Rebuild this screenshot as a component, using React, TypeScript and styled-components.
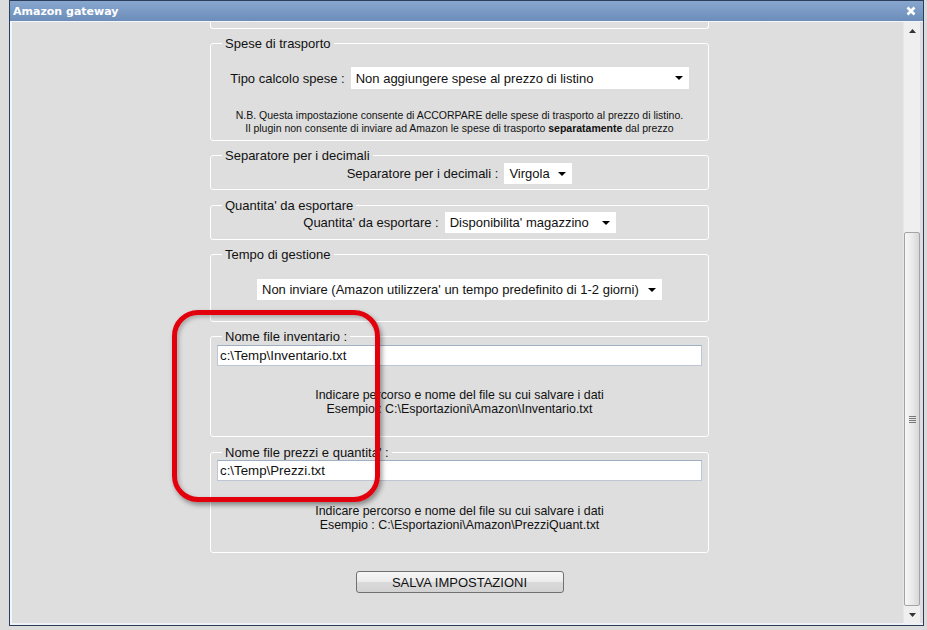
import React from 'react';
import styled, { createGlobalStyle } from 'styled-components';

const Global = createGlobalStyle`
  html, body { margin: 0; padding: 0; background: #dcdcdc; }
  body { font-family: "Liberation Sans", Arial, sans-serif; color: #111; }
`;

const Page = styled.div`
  width: 927px;
  height: 630px;
  overflow: hidden;
  padding-left: 9px;
  box-sizing: border-box;
`;

const Window = styled.div`
  position: relative;
  width: 915px;
  height: 626px;
  box-sizing: border-box;
  border: 1px solid #2c3e5b;
  display: flex;
  flex-direction: column;
  background: #dedede;
`;

const TitleBar = styled.div`
  height: 20px;
  flex: none;
  background: linear-gradient(#88a7cf, #6c8dba);
  border-bottom: 1px solid #f3f6fa;
  display: flex;
  align-items: center;
  justify-content: space-between;
  padding: 0 7px 0 3px;
`;

const Title = styled.span`
  font-family: "DejaVu Sans", Verdana, sans-serif;
  font-weight: bold;
  font-size: 11px;
  color: #fff;
  margin-top: 1px;
`;

const Main = styled.div`
  flex: 1;
  display: flex;
  min-height: 0;
  border-left: 2px solid #f2f5f9;
  border-bottom: 2px solid #eef1f5;
`;

const Content = styled.div`
  flex: 1;
  display: flex;
  flex-direction: column;
  align-items: center;
  overflow: hidden;
  padding-left: 4px;
`;

const Stub = styled.div`
  width: 499px;
  height: 7px;
  box-sizing: border-box;
  border: 1px solid #fff;
  border-top: none;
  border-radius: 0 0 3px 3px;
`;

const Group = styled.section<{ $pb: number; $mt?: number }>`
  width: 499px;
  box-sizing: border-box;
  border: 1px solid #fff;
  border-radius: 3px;
  margin-top: ${(p) => p.$mt ?? 14}px;
  padding: 0 6px ${(p) => p.$pb}px;
  display: flex;
  flex-direction: column;
`;

const Legend = styled.div`
  align-self: flex-start;
  margin: -8px 0 0 5px;
  height: 16px;
  line-height: 16px;
  padding: 0 3px;
  background: #dedede;
  font-size: 13px;
`;

const Row = styled.div<{ $mt: number }>`
  display: flex;
  justify-content: center;
  align-items: center;
  gap: 6px;
  margin-top: ${(p) => p.$mt}px;
  font-size: 13px;
`;

const Select = styled.div<{ $w: number; $h?: number }>`
  width: ${(p) => p.$w}px;
  height: ${(p) => p.$h ?? 21}px;
  box-sizing: border-box;
  background: #fff;
  display: flex;
  align-items: center;
  padding-left: 5px;
  font-size: 13px;
  white-space: nowrap;
`;

const Arrow = styled.svg`
  margin-left: auto;
  margin-right: 6px;
  flex: none;
`;

const Note = styled.div<{ $mt: number }>`
  margin-top: ${(p) => p.$mt}px;
  font-size: 10.5px;
  line-height: 13px;
  text-align: center;
  white-space: nowrap;
  b { font-weight: bold; }
`;

const Hint = styled.div<{ $mt: number }>`
  margin-top: ${(p) => p.$mt}px;
  font-size: 12.4px;
  line-height: 14px;
  text-align: center;
`;

const Input = styled.div<{ $mt: number }>`
  margin-top: ${(p) => p.$mt}px;
  height: 21px;
  box-sizing: border-box;
  background: #fff;
  border: 1px solid #bcc7d3;
  border-top-color: #9fb0c2;
  padding-left: 2px;
  font-size: 13.3px;
  line-height: 19px;
`;

const Button = styled.div`
  margin-top: 18px;
  width: 208px;
  height: 22px;
  box-sizing: border-box;
  border: 1px solid #707070;
  border-radius: 3px;
  background: linear-gradient(#f6f6f6 0%, #ebebeb 50%, #dadada 51%, #d2d2d2 100%);
  display: flex;
  align-items: center;
  justify-content: center;
  font-size: 13px;
`;

const Scrollbar = styled.div`
  width: 16px;
  flex: none;
  margin-right: 3px;
  background: #efefef;
  border-left: 1px solid #e6e6e6;
  display: flex;
  flex-direction: column;
  align-items: stretch;
`;

const ScrollBtn = styled.div`
  height: 17px;
  flex: none;
  display: flex;
  align-items: center;
  justify-content: center;
`;

const Track = styled.div`
  flex: 1;
  display: flex;
  flex-direction: column;
  justify-content: flex-end;
`;

const Thumb = styled.div`
  height: 374px;
  box-sizing: border-box;
  border: 1px solid #a4a4a4;
  border-radius: 2px;
  background: linear-gradient(90deg, #f7f7f7 0%, #ececec 45%, #d8d8d8 100%);
  display: flex;
  align-items: center;
  justify-content: center;
`;

const Highlight = styled.div`
  position: absolute;
  left: 162px;
  top: 309px;
  width: 208px;
  height: 192px;
  box-sizing: border-box;
  border: 5px solid #e2000c;
  border-radius: 26px;
  box-shadow: 2px 3px 5px rgba(0, 0, 0, 0.4), inset 2px 2px 4px rgba(0, 0, 0, 0.25);
  pointer-events: none;
`;

const Tri = ({ up }: { up?: boolean }) => (
  <svg width="7" height="4" viewBox="0 0 7 4">
    <path d={up ? 'M0 4 L3.5 0 L7 4 Z' : 'M0 0 L7 0 L3.5 4 Z'} fill="#333" />
  </svg>
);

const DropArrow = () => (
  <Arrow width="8" height="4" viewBox="0 0 8 4">
    <path d="M0 0 L8 0 L4 4 Z" fill="#000" />
  </Arrow>
);

export default function App() {
  return (
    <>
      <Global />
      <Page>
        <Window>
          <TitleBar>
            <Title>Amazon gateway</Title>
            <svg width="10" height="10" viewBox="0 0 10 10">
              <path d="M1.5 1.5 L8.5 8.5 M8.5 1.5 L1.5 8.5" stroke="#fff" strokeWidth="2.6" />
            </svg>
          </TitleBar>
          <Main>
            <Content>
              <Stub />
              <Group $pb={5}>
                <Legend>Spese di trasporto</Legend>
                <Row $mt={15}>
                  <span>Tipo calcolo spese :</span>
                  <Select $w={338} $h={22}>
                    Non aggiungere spese al prezzo di listino
                    <DropArrow />
                  </Select>
                </Row>
                <Note $mt={20}>
                  N.B. Questa impostazione consente di ACCORPARE delle spese di trasporto al prezzo di listino.
                  <br />
                  Il plugin non consente di inviare ad Amazon le spese di trasporto <b>separatamente</b> dal prezzo
                </Note>
              </Group>
              <Group $pb={5}>
                <Legend>Separatore per i decimali</Legend>
                <Row $mt={-1}>
                  <span>Separatore per i decimali :</span>
                  <Select $w={68}>
                    Virgola
                    <DropArrow />
                  </Select>
                </Row>
              </Group>
              <Group $pb={6} $mt={15}>
                <Legend>Quantita' da esportare</Legend>
                <Row $mt={-2}>
                  <span>Quantita' da esportare :</span>
                  <Select $w={171}>
                    Disponibilita' magazzino
                    <DropArrow />
                  </Select>
                </Row>
              </Group>
              <Group $pb={21}>
                <Legend>Tempo di gestione</Legend>
                <Row $mt={16}>
                  <Select $w={405}>
                    Non inviare (Amazon utilizzera' un tempo predefinito di 1-2 giorni)
                    <DropArrow />
                  </Select>
                </Row>
              </Group>
              <Group $pb={20}>
                <Legend>Nome file inventario :</Legend>
                <Input $mt={0}>c:\Temp\Inventario.txt</Input>
                <Hint $mt={22}>
                  Indicare percorso e nome del file su cui salvare i dati
                  <br />
                  Esempio : C:\Esportazioni\Amazon\Inventario.txt
                </Hint>
              </Group>
              <Group $pb={20} $mt={15}>
                <Legend>Nome file prezzi e quantita' :</Legend>
                <Input $mt={-1}>c:\Temp\Prezzi.txt</Input>
                <Hint $mt={23}>
                  Indicare percorso e nome del file su cui salvare i dati
                  <br />
                  Esempio : C:\Esportazioni\Amazon\PrezziQuant.txt
                </Hint>
              </Group>
              <Button>SALVA IMPOSTAZIONI</Button>
            </Content>
            <Scrollbar>
              <ScrollBtn>
                <Tri up />
              </ScrollBtn>
              <Track>
                <Thumb>
                  <svg width="7" height="7" viewBox="0 0 7 7">
                    <path d="M0 0.5 H7 M0 2.5 H7 M0 4.5 H7 M0 6.5 H7" stroke="#777" strokeWidth="1" />
                  </svg>
                </Thumb>
              </Track>
              <ScrollBtn>
                <Tri />
              </ScrollBtn>
            </Scrollbar>
          </Main>
          <Highlight />
        </Window>
      </Page>
    </>
  );
}
